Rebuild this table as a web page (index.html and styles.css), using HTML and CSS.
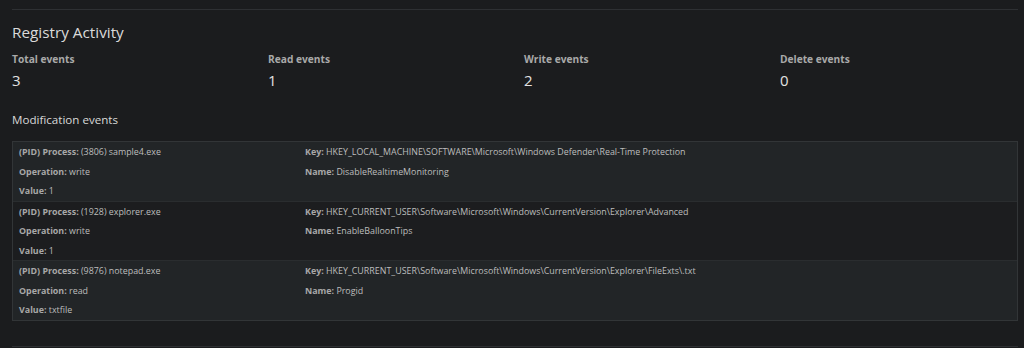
FILE: index.html
```html
<!DOCTYPE html>
<html>
<head>
<meta charset="utf-8">
<link rel="stylesheet" href="styles.css">
</head>
<body>
<div class="page">
  <hr class="rule">
  <h2 class="title">Registry Activity</h2>
  <div class="stats">
    <div class="stat"><div class="stat-label">Total events</div><div class="stat-value">3</div></div>
    <div class="stat"><div class="stat-label">Read events</div><div class="stat-value">1</div></div>
    <div class="stat"><div class="stat-label">Write events</div><div class="stat-value">2</div></div>
    <div class="stat"><div class="stat-label">Delete events</div><div class="stat-value">0</div></div>
  </div>
  <h3 class="subtitle">Modification events</h3>
  <div class="table">
    <div class="row alt">
      <div class="col">
        <div class="line"><b>(PID) Process:</b> (3806) sample4.exe</div>
        <div class="line"><b>Operation:</b> write</div>
        <div class="line"><b>Value:</b> 1</div>
      </div>
      <div class="col">
        <div class="line"><b>Key:</b> HKEY_LOCAL_MACHINE\SOFTWARE\Microsoft\Windows Defender\Real-Time Protection</div>
        <div class="line"><b>Name:</b> DisableRealtimeMonitoring</div>
      </div>
    </div>
    <div class="row">
      <div class="col">
        <div class="line"><b>(PID) Process:</b> (1928) explorer.exe</div>
        <div class="line"><b>Operation:</b> write</div>
        <div class="line"><b>Value:</b> 1</div>
      </div>
      <div class="col">
        <div class="line"><b>Key:</b> HKEY_CURRENT_USER\Software\Microsoft\Windows\CurrentVersion\Explorer\Advanced</div>
        <div class="line"><b>Name:</b> EnableBalloonTips</div>
      </div>
    </div>
    <div class="row alt">
      <div class="col">
        <div class="line"><b>(PID) Process:</b> (9876) notepad.exe</div>
        <div class="line"><b>Operation:</b> read</div>
        <div class="line"><b>Value:</b> txtfile</div>
      </div>
      <div class="col">
        <div class="line"><b>Key:</b> HKEY_CURRENT_USER\Software\Microsoft\Windows\CurrentVersion\Explorer\FileExts\.txt</div>
        <div class="line"><b>Name:</b> Progid</div>
      </div>
    </div>
  </div>
  <hr class="rule bottom">
</div>
</body>
</html>
```

FILE: styles.css
```css
html, body {
  margin: 0;
  padding: 0;
  background: #1b1c1e;
}
body {
  font-family: "Open Sans", "Liberation Sans", sans-serif;
  color: #d6d6d6;
}
.page {
  margin: 0 6px 0 12px;
  padding-top: 9px;
}
.rule {
  border: 0;
  border-top: 1px solid #2e3033;
  margin: 0;
  height: 0;
}
.title {
  margin: 12px 0 0;
  font-size: 15.3px;
  line-height: 20px;
  font-weight: 400;
  color: #dadada;
}
.stats {
  display: grid;
  grid-template-columns: repeat(4, 238px);
  column-gap: 18px;
  margin-top: 9px;
}
.stat-label {
  font-size: 10.2px;
  line-height: 16px;
  font-weight: 700;
  color: #a9a9a9;
}
.stat-value {
  margin-top: 3px;
  font-size: 15px;
  line-height: 20px;
  color: #e2e2e2;
}
.subtitle {
  margin: 21px 0 0;
  font-size: 11.6px;
  line-height: 18px;
  font-weight: 400;
  color: #d8d8d8;
}
.table {
  margin-top: 12px;
  border: 1px solid #323537;
}
.row {
  display: grid;
  grid-template-columns: 286px 1fr;
  padding: 0 6px;
  background: #1c1d1f;
  border-top: 1px solid #2a2d2f;
}
.row:first-child {
  border-top: 0;
}
.row.alt {
  background: #222527;
}
.line {
  font-size: 8.9px;
  line-height: 19.5px;
  color: #bdbdbd;
  white-space: nowrap;
}
.line b {
  font-weight: 700;
  color: #a8a8a8;
}
.bottom {
  margin-top: 25px;
}
```
